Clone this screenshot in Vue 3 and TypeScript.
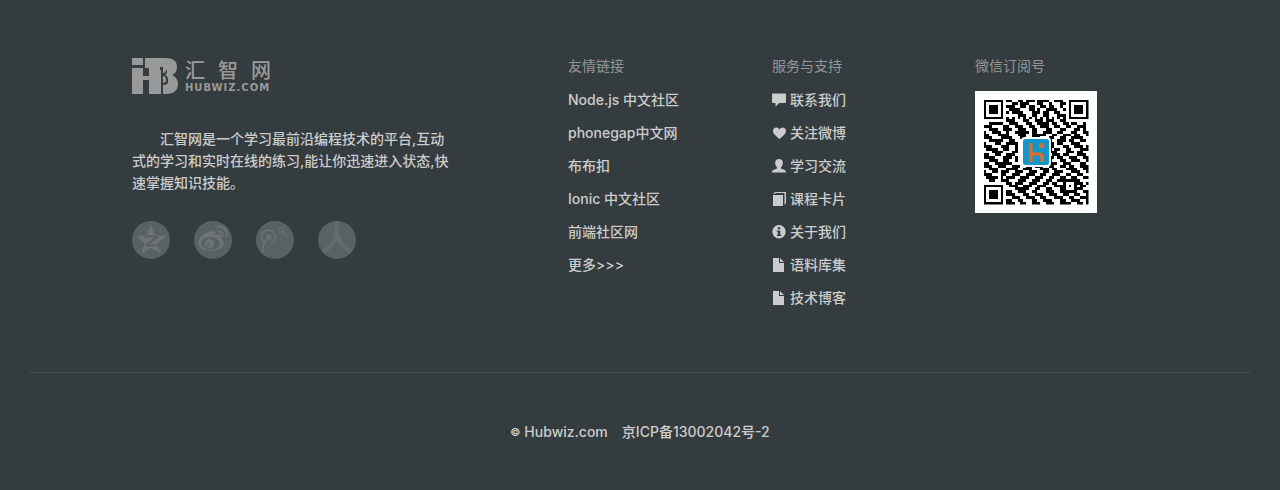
<script setup lang="ts">
interface Entry {
  label: string
  icon?: string
}

const friends: Entry[] = [
  { label: 'Node.js 中文社区' },
  { label: 'phonegap中文网' },
  { label: '布布扣' },
  { label: 'Ionic 中文社区' },
  { label: '前端社区网' },
  { label: '更多>>>' },
]

const icons: Record<string, string> = {
  comment: 'M1 0.500H13Q14 0.500 14 1.500V9Q14 10 13 10H7.500L3.500 13.500V10H1Q0 10 0 9V1.500Q0 0.500 1 0.500Z',
  heart: 'M7.500 13.200C5 10.500 1 8.300 1 5C1 1 5.800.2 7.500 3.500C9.200.2 14 1 14 5C14 8.300 10 10.500 7.500 13.200Z',
  user: 'M7 0C9.500 0 10.900 1.500 10.800 4C10.700 6 9.900 7.500 8.900 8.500V9.500C11 10.600 14 10.600 14 13.500H0C0 10.600 3 10.600 5.100 9.500V8.500C4.100 7.500 3.300 6 3.200 4C3.100 1.500 4.500 0 7 0Z',
  book: 'M1 3H11V14H1ZM1 2L3 0H14V11L12.500 13V1H3.500L2.500 2Z',
  info: 'M7 0A6.700 6.700 0 1 1 7 13.400A6.700 6.700 0 1 1 7 0ZM5.800 2.200V4.200H8.200V2.200ZM4.800 5.400V6.700H5.800V9.700H4.800V11H9.300V9.700H8.200V5.400Z',
  file: 'M1 0H7V5H12V14H1ZM8 0L12 4H8Z',
}

const services: Entry[] = [
  { label: '联系我们', icon: 'comment' },
  { label: '关注微博', icon: 'heart' },
  { label: '学习交流', icon: 'user' },
  { label: '课程卡片', icon: 'book' },
  { label: '关于我们', icon: 'info' },
  { label: '语料库集', icon: 'file' },
  { label: '技术博客', icon: 'file' },
]

const modules: string[] = [
  '1111111011001101110111100111001111111',
  '1000001000110111000110010001101000001',
  '1011101011100110110011011001001011101',
  '1011101001111000110100111100101011101',
  '1011101010111100011101100110001011101',
  '1000001000001110011001100011101000001',
  '1111111010101010101010101010101111111',
  '0000000011100011001110111001100000000',
  '0011111001110001100111101100110110010',
  '1110000110011100110011100110011001110',
  '0011100111001110011000110001100011010',
  '1001110010011111011001110011000110011',
  '1100011110001110011111001100111011001',
  '1110001111000110011100011001100111100',
  '0011111001100000000000110011101100110',
  '1000110011110000000000011011000111000',
  '1110001110010000000000011000110011101',
  '0111100110010000000000010110011000111',
  '0001111000110000000000011100011101100',
  '1100110011100000000000001110110001110',
  '1111000111010000000000011011001110011',
  '0011100110010000000000010001100111001',
  '1100111111000000000000011100111000110',
  '1110011100111001101110011001101100111',
  '0011100011110011100011101100011110011',
  '1001101110011100111001100111000111001',
  '1110001100111001110011001110011001100',
  '0111101011100111001110011001100110011',
  '0011001110001110011100110011111111000',
  '0000000011011100111001101100100011101',
  '1111111001110011100111000111101010110',
  '1000001000011111001100110001100011100',
  '1011101011001110011000111001111110011',
  '1011101011100011001110011100110011001',
  '1011101000111001110011000111001100111',
  '1000001011001100011001110001100111001',
  '1111111011100110011100111001111001101',
]

const modulePath = modules
  .map((row, y) => [...row].map((bit, x) => (bit === '1' ? `M${x} ${y}h1v1h-1z` : '')).join(''))
  .join('')
</script>

<template>
  <footer class="footer">
    <div class="columns">
      <section class="about">
        <a class="brand" href="#" aria-label="汇智网 HUBWIZ.COM">
          <svg class="mark" viewBox="0 0 46 36" aria-hidden="true">
            <path d="M0 0H11V7H0ZM0 10H11V18H17V10H13V0H33C41 0 45 3 45 9C45 13 43 16 40 17C44 19 46 22 46 26C46 33 41 36 33 36H17V22H11V36H0Z" />
            <path class="cut" d="M28 9H31V15Q34 15 34 12H35V14Q35 16 33 17Q36 18 36 21V24Q36 27 31 27V25Q34 25 34 22Q34 18 31 18V36H29V12H28Z" />
          </svg>
          <span class="wordmark">
            <span class="name">汇智网</span>
            <span class="domain">HUBWIZ.COM</span>
          </span>
        </a>
        <p class="intro">汇智网是一个学习最前沿编程技术的平台,互动式的学习和实时在线的练习,能让你迅速进入状态,快速掌握知识技能。</p>
        <div class="social">
          <a href="#" aria-label="QQ空间">
            <svg viewBox="0 0 38 38">
              <path class="fill" d="M19 4L23.300 14.200L34 15L25.800 22L28.500 32.500L19 27L9.500 32.500L12.200 22L4 15L14.700 14.200Z" />
              <path class="gap" d="M12.500 16Q19 14.500 25 16L14.500 24Q20 25.300 27 23.500" />
            </svg>
          </a>
          <a href="#" aria-label="新浪微博">
            <svg viewBox="0 0 38 38">
              <path class="fill" d="M16 11C19 9 22 10 21 14C26 12 29 14 27 18C31 20 31 25 26 28C18 32 4 30 4 22C4 17 11 11 16 11Z" />
              <ellipse class="hole" cx="16.500" cy="22.500" rx="9.500" ry="6.500" />
              <circle class="fill" cx="15.500" cy="22.700" r="4.500" />
              <circle class="hole" cx="14" cy="24" r="1.700" />
              <path class="line" d="M23 6Q33 4 33 16M24 10.500Q29 10 29 16" />
            </svg>
          </a>
          <a href="#" aria-label="腾讯微博">
            <svg viewBox="0 0 38 38">
              <circle class="fill" cx="13" cy="16" r="2.700" />
              <path class="thin" d="M9 22A7 7 0 1 1 15 22.500M12 17Q6 23 7 31" />
              <circle class="fill" cx="26.500" cy="10.500" r="1.500" />
              <path class="thin small" d="M25 14.200A4 4 0 1 1 30 12M27 11Q29 16 33 17" />
            </svg>
          </a>
          <a href="#" aria-label="人人网">
            <svg viewBox="0 0 38 38">
              <path class="stroke" d="M18.500 0V10Q18.500 22 5 31M18.500 10Q18.500 22 33 31" />
            </svg>
          </a>
        </div>
      </section>

      <nav aria-labelledby="friends-title">
        <h2 id="friends-title">友情链接</h2>
        <ul>
          <li v-for="item in friends" :key="item.label"><a href="#">{{ item.label }}</a></li>
        </ul>
      </nav>

      <nav aria-labelledby="services-title">
        <h2 id="services-title">服务与支持</h2>
        <ul>
          <li v-for="item in services" :key="item.label">
            <a href="#" class="with-icon">
              <svg viewBox="0 0 14 14" aria-hidden="true"><path :d="icons[item.icon ?? 'file']" fill-rule="evenodd" /></svg>
              {{ item.label }}
            </a>
          </li>
        </ul>
      </nav>

      <section>
        <h2>微信订阅号</h2>
        <svg class="qr" viewBox="0 0 122 122" role="img" aria-label="微信订阅号">
          <rect width="122" height="122" fill="#fff" />
          <svg x="8.500" y="8.500" width="105" height="105" viewBox="0 0 37 37">
            <path :d="modulePath" shape-rendering="crispEdges" />
          </svg>
          <rect x="46" y="46" width="30" height="30" rx="4" fill="#fff" />
          <rect x="48" y="48" width="26" height="26" rx="2.500" fill="#1497c8" />
          <path d="M56 52V71M56 65L58 63H64Q67 63 67 66V71" fill="none" stroke="#e96a24" stroke-width="3" />
          <circle cx="66.500" cy="54.500" r="2.500" fill="#e96a24" />
        </svg>
      </section>
    </div>

    <div class="legal">
      <small>©</small>
      <span>Hubwiz.com</span>
      <a href="#">京ICP备13002042号-2</a>
    </div>
  </footer>
</template>

<style>
body {
  margin: 0;
  background: #353c3f;
}
</style>

<style scoped>
.footer {
  box-sizing: border-box;
  min-height: 100vh;
  padding: 55px 30px 0;
  background: #353c3f;
  color: #ccc;
  font: 14px/22px Inter, "Noto Sans CJK SC", sans-serif;
  font-weight: 500;
}

a {
  color: inherit;
  text-decoration: none;
}

.columns {
  display: grid;
  grid-template-columns: minmax(0, 436fr) minmax(0, 204fr) minmax(0, 203fr) minmax(0, 275fr);
  padding: 0 0 63px 102px;
  border-bottom: 1px solid #475054;
}

.brand {
  display: flex;
  gap: 7px;
  padding-top: 3px;
  color: #999;
}

.mark {
  width: 46px;
  height: 36px;
  fill: #999;
}

.mark .cut {
  fill: #353c3f;
}

.wordmark {
  display: flex;
  flex-direction: column;
  padding-top: 2px;
}

.name {
  font-size: 20px;
  font-weight: 500;
  line-height: 22px;
  letter-spacing: 13px;
}

.domain {
  font: 700 10px/12px "DejaVu Sans", sans-serif;
  letter-spacing: 1px;
}

.intro {
  max-width: 320px;
  margin: 34px 0 27px;
  text-indent: 2em;
}

.social {
  display: flex;
  gap: 24px;
}

.social a {
  display: block;
  width: 38px;
  height: 38px;
  overflow: hidden;
  border-radius: 50%;
  background: #5a6162;
}

.social svg {
  display: block;
}

.social .fill {
  fill: #6d7273;
}

.social .hole {
  fill: #5a6162;
}

.gap,
.line,
.thin,
.stroke {
  fill: none;
  stroke: #6d7273;
}

.gap {
  stroke: #5a6162;
  stroke-width: 2;
}

.line {
  stroke-width: 2;
}

.thin {
  stroke-width: 1.5;
}

.small {
  stroke-width: 1;
}

.stroke {
  stroke: #666c6e;
  stroke-width: 4;
}

h2 {
  margin: 0 0 12px;
  color: #949697;
  font-size: 14px;
  font-weight: 400;
  line-height: 22px;
}

ul {
  display: grid;
  gap: 11px;
  margin: 0;
  padding: 0;
  list-style: none;
}

.with-icon {
  display: flex;
  align-items: center;
  gap: 4px;
}

.with-icon svg {
  width: 14px;
  height: 14px;
  fill: #ccc;
}

.qr {
  display: block;
  width: 122px;
  height: 122px;
  margin-top: 14px;
}

.legal {
  display: flex;
  justify-content: center;
  padding: 48px 0;
}

.legal small {
  margin-right: 4px;
  font-size: 11px;
  font-weight: 700;
}

.legal span {
  margin-right: 14px;
}
</style>
